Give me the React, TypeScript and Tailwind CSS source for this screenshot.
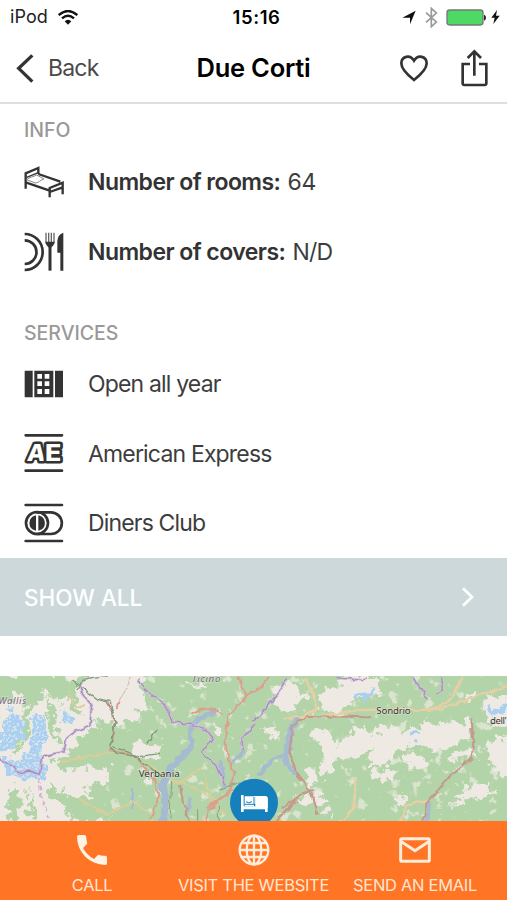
import type { ReactNode } from 'react';

const BedIcon = () => (
  <svg width="40" height="32" viewBox="0 0 120 96" fill="none" stroke="#333" strokeWidth="7">
    <path d="M5 68V22L43 6v18" />
    <path d="M8 34l35-14" strokeWidth="4" />
    <path d="M5 49l72 25M43 24l66 23M77 94V66l39-16v35M77 78l39-14" />
    <path d="M8 41c8-8 20-8 30-14l22 12c-10 2-16 12-26 12z" stroke="#888" strokeWidth="3" />
  </svg>
);

const CutleryIcon = () => (
  <svg width="40" height="40" viewBox="0 0 120 120" fill="none" stroke="#333" strokeWidth="8">
    <path d="M2 6a54 54 0 0 1 0 108" />
    <path d="M2 25a35 35 0 0 1 0 71" />
    <path d="M78 40v76" strokeWidth="9" />
    <path d="M66 2v27q0 8 12 12 12-4 12-12V2M74 2v30M82 2v30" strokeWidth="4" stroke="#666" />
    <path d="M64 29h28q-2 12-14 20-12-8-14-20z" fill="#333" stroke="none" />
    <path d="M118 2v114h-9V62h-9V28q1-21 18-26z" fill="#333" stroke="none" />
  </svg>
);

const CalendarIcon = () => (
  <svg width="40" height="28" viewBox="0 0 120 84" fill="#333">
    <path d="M2 2h24v80H2zM93 2h24v80H93z" />
    <path
      fillRule="evenodd"
      d="M31 2h57v80H31zM40 12v14h14V12zM62 12v14h14V12zM40 34v14h14V34zM62 34v14h14V34zM40 57v15h14V57zM62 57v15h14V57z"
    />
  </svg>
);

const AmexIcon = () => (
  <svg width="40" height="40" viewBox="0 0 120 120" fill="none" stroke="#333" strokeWidth="8" strokeLinecap="round">
    <path d="M5 7h109M5 113h109" />
    <g
      fill="#fff"
      strokeWidth="15"
      strokeLinejoin="round"
      paintOrder="stroke"
      fontFamily="Inter, sans-serif"
      fontWeight="800"
      fontSize="70"
    >
      <text x="0" y="83" transform="skewX(-6) translate(16 0)" textLength="54" lengthAdjust="spacingAndGlyphs">A</text>
      <text x="63" y="83" textLength="48" lengthAdjust="spacingAndGlyphs">E</text>
    </g>
  </svg>
);

const DinersIcon = () => (
  <svg width="40" height="40" viewBox="0 0 120 120" fill="none" stroke="#333" strokeWidth="8" strokeLinecap="round">
    <path d="M5 6h109M5 114h109" />
    <path d="M38 28h43a32 32 0 0 1 0 65H38" />
    <circle cx="39" cy="60" r="33" />
    <path d="M33 41a20 20 0 0 0 0 38zM46 41a20 20 0 0 1 0 38z" fill="#333" strokeWidth="6" />
  </svg>
);

const StatusBar = () => (
  <div className="grid h-[34px] grid-cols-3 items-center text-[18px] leading-none text-[#222]">
    <div className="flex items-center pl-[10px]">
      <span className="w-[48px] tracking-[0.1px]">iPod</span>
      <svg width="20" height="15" viewBox="0 0 60 45" fill="none" stroke="#111" strokeWidth="7">
        <path d="M2 15Q30-9 58 15M12 25q18-16 36 0" />
        <path d="M20 34q10-9 20 0L30 44z" fill="#111" stroke="none" />
      </svg>
    </div>
    <div className="pl-[6px] text-center text-[18.5px] font-semibold tracking-[0.6px] text-black">15:16</div>
    <div className="flex items-center justify-end pr-[7px]">
      <svg width="14" height="15" viewBox="0 0 42 45" fill="#111">
        <path d="M41 2L24 43V23H1z" />
      </svg>
      <svg className="ml-[9px]" width="13" height="21" viewBox="0 0 39 63" fill="none" stroke="#999" strokeWidth="5">
        <path d="M3 17l31 28-15 14V4l15 14L3 46" />
      </svg>
      <svg className="ml-2" width="40" height="17" viewBox="0 0 120 51">
        <rect x="3" y="3" width="108" height="45" rx="8" fill="#4cd964" stroke="#777" strokeWidth="4" />
        <path d="M114 17q6 2 6 9t-6 9z" fill="#222" />
      </svg>
      <svg className="ml-[5px]" width="9" height="14" viewBox="0 0 27 42" fill="#111">
        <path d="M18 0L1 23h10L7 42 26 17H15z" />
      </svg>
    </div>
  </div>
);

const NavBar = () => (
  <div className="flex h-[70px] items-center border-b-2 border-[#dedede] pr-[19px] pl-4 text-[#333]">
    <div className="flex flex-1 items-center">
      <svg width="18" height="29" viewBox="0 0 54 87" fill="none" stroke="#333" strokeWidth="10">
        <path d="M49 4L8 43l41 40" />
      </svg>
      <span className="ml-[14px] text-[23px] tracking-[-0.8px] text-[#4a4a4a]">Back</span>
    </div>
    <h1 className="pl-[3px] text-[25.5px] font-semibold tracking-[-0.25px] text-black">Due Corti</h1>
    <div className="flex flex-1 items-center justify-end gap-[33px]">
      <svg width="28" height="27" viewBox="0 0 84 81" fill="none" stroke="#333" strokeWidth="8">
        <path d="M42 75C20 58 4 42 4 25 4 4 30-3 42 17 54-3 80 4 80 25c0 17-16 33-38 50z" />
      </svg>
      <svg width="27" height="38" viewBox="0 0 81 114" fill="none" stroke="#333" strokeWidth="8">
        <path d="M27 45H5v58q0 5 5 5h61q5 0 5-5V45H54M40 80V9M20 27L40 7l20 20" />
      </svg>
    </div>
  </div>
);

const Row = ({ icon, children }: { icon: ReactNode; children: ReactNode }) => (
  <div className="flex h-[69.7px] items-center pl-6 text-[23px] tracking-[-0.83px] text-[#3d3d3d]">
    <div className="w-16 shrink-0">{icon}</div>
    <div className="pt-px">{children}</div>
  </div>
);

const SectionTitle = ({ children }: { children: ReactNode }) => (
  <h2 className="pl-6 text-[19.5px] leading-[34px] font-medium text-[#999]">{children}</h2>
);

// Terrain is drawn at three units per pixel
const TerrainMap = () => (
  <svg className="block h-[145px] w-full" viewBox="0 33 1521 435" preserveAspectRatio="none">
    <defs>
      <filter id="rough" x="-5%" y="-5%" width="110%" height="110%" colorInterpolationFilters="sRGB">
        <feTurbulence type="fractalNoise" baseFrequency="0.035" numOctaves="4" seed="8" />
        <feDisplacementMap in="SourceGraphic" scale="60" xChannelSelector="R" yChannelSelector="G" />
        <feGaussianBlur stdDeviation="1.5" />
      </filter>
      <filter id="wobble" x="-5%" y="-5%" width="110%" height="110%" colorInterpolationFilters="sRGB">
        <feTurbulence type="fractalNoise" baseFrequency="0.05" numOctaves="1" seed="3" />
        <feDisplacementMap in="SourceGraphic" scale="20" xChannelSelector="R" yChannelSelector="G" />
        <feGaussianBlur stdDeviation="1" />
      </filter>
      <filter id="speckle" x="0" y="0" width="100%" height="100%" colorInterpolationFilters="sRGB">
        <feTurbulence type="fractalNoise" baseFrequency="0.03" numOctaves="4" seed="12" />
        <feColorMatrix values="0 0 0 0 .93  0 0 0 0 .92  0 0 0 0 .88  9 0 0 0 -5.6" />
      </filter>
      <filter id="grain" x="0" y="0" width="100%" height="100%" colorInterpolationFilters="sRGB">
        <feTurbulence type="fractalNoise" baseFrequency="0.12" numOctaves="2" seed="5" />
        <feColorMatrix values="0 0 0 0 .93  0 0 0 0 .92  0 0 0 0 .88  9 0 0 0 -4.7" />
      </filter>
      <clipPath id="ice">
        <path d="M0 120h75v130H0zM95 140h55v130H95zM165 105h50v80h-50zM30 265h120v80H30z" />
      </clipPath>
    </defs>
    <rect y="30" width="1521" height="440" fill="#b3d4a8" />
    <rect y="30" width="1521" height="440" filter="url(#speckle)" opacity=".7" />
    <g fill="#eeeae3" filter="url(#rough)">
      <path d="M-20 10H425l5 60 10 50-38 50-120 5-40 55-50 40 20 40h120l-20 40-60 10 30 40 40 40v90H-20z" />
      <path d="M375 250l50-20 60 10-15 40-60-5zM640 180l40 10-10 30-35-5zM560 50l70 10-40 15zM430 320l30 10-10 40z" />
      <path d="M820 70l60-20 40 50-60 35-40-10zM790 180l50 5-15 35-40-20zM960 80l60-20 15-30h90l20 60-80 10-40 45-60-10z" />
      <path d="M930 190l60 10 15 40 45-35 40-20 30 30 25-35 50 15 60-5 30-20 50 10 80-15-10 50-80 45-70-20-60 10-40 60-50-10 20-50-60 20-80 30z" />
      <path d="M1220 265l50 5 10 40-60 5zM1340 290l50-45 40 30zM960 300l40-5 10 25-40 5zM1100 315l90 5-20 30-60-10zM910 310l45 5 10 35-40 10z" />
      <path d="M1450 100l90-10v90l-75-10zM1460 230l80-10v120l-60-20-10-40zM1390 370l80-20 10 40-90 15-40 30zM1390 90l40-10-20 30z" />
      <path d="M1200 380l25 10-30 30zM880 400l80-10 20 20-70 10zM950 440l50-5-10 25z" />
    </g>
    <g fill="#b3d4a8" filter="url(#rough)">
      <path d="M-10 30H200l10 60-40 20-30-30-50 60 0 50-40 80-12-10 30-90 10-60-30-30-50 50-20-10zM135 90l30 40 10 100-15-5-20-80zM210 35l45 5-30 45 25 65-28-6-20-70z" />
      <path d="M160 290l130-35 100-5 20 40-120 20-110 5zM140 350l70 50 50-10 60 10v70H210l-20-50-40-20zM35 355l30 50-10 60H15zM85 370l20 60v40H90z" />
      <path d="M235 220l80-40 70 10 10 60-80 20-75-20z" />
    </g>
    <g fill="#a9d0f2" filter="url(#rough)">
      <path d="M35 130l40 30-30 80-45 20v-60zM105 150l30 5v80l-15 40 30 40-30 30-60-10-45-15-15-40 50 10 45-20-5-50zM175 115l20 10 15 50-20 5z" />
      <path d="M1070 80l50-5 5 25-40 5zM1225 205l35-5 5 15-35 10zM1465 125l50-5v30l-35 5z" />
    </g>
    <g clipPath="url(#ice)">
      <rect y="30" width="1521" height="440" filter="url(#grain)" opacity=".7" />
    </g>
    {/* Lakes */}
    <g fill="none" stroke="#a6bbd2" strokeLinejoin="round" strokeLinecap="round" filter="url(#wobble)">
      <path d="M640 143l-45 18-25 28 5 55-28 30" strokeWidth="14" />
      <path d="M558 262l-18 18-30 35-22 45 10 50-10 60" strokeWidth="22" />
      <path d="M885 165l-20 40-8 60 5 30 20 30M860 265l-45 20-35 45" strokeWidth="12" />
      <path d="M895 160l-24 40-5 50" strokeWidth="20" />
      <path d="M730 262l-30 30M660 290l15 80M397 370v55M1290 410l-10 60M570 400l-10 50" strokeWidth="10" />
    </g>
    <g fill="none" filter="url(#wobble)">
      <path d="M180 290l80-15 80-15 75 20 120 75 70-45M610 320l25 90 40 40M545 350l120 60M230 400l90 50 80-40 60 40M205 80l25 50 25-10" stroke="#dbcd98" strokeWidth="6" />
      <path d="M1521 65l-95 30-110 40-60-2-180 2-130 20-90 2M915 38l25 50 10 45-55 24M1300 135l50-30 40-70M1070 340l-10 90-30 35M1285 405l-65 15-20 50" stroke="#e6cfa5" strokeWidth="8" />
      <path d="M715 35l25 58-55 60-10 70 8 50 20 50-15 60-60 50-20 60M735 93l40-20 35-38M570 150l50-22 50 22M620 430l80-60M330 255l80 20 60 80 5 50-25 60M350 130l5-20" stroke="#dc9f8b" strokeWidth="6" />
      <path d="M1415 160l5 70-5 50-75 65-60 70-10 55M1110 157l-190-4-42 30-10 80 25 70 45 55 15 60M850 430l50-40 40-15M830 465l60-60M540 360l10 60 20 50" stroke="#c4998c" strokeWidth="6" />
      <path d="M355 110l30-50 10-25" stroke="#cfc6bd" strokeWidth="4" />
      <path d="M315 105l25 40 3 60-13 35" stroke="#b88d80" strokeWidth="5" />
      <path d="M215 45l75 55 40 10 15 60-15 75 20 20 60 10 75 60M230 70l30-30 60-8M340 245l80 30 60-10M440 240l35-50" stroke="#7f9a7d" strokeWidth="4" />
      <path d="M515 345l-5 120M660 375l60-25M655 420v50M590 430v40" stroke="#8f9a8a" strokeWidth="3" />
    </g>
    {/* National borders */}
    <g fill="none" filter="url(#wobble)" strokeLinejoin="round">
      <path d="M-5 280l35 15 25 28 35-5 28 10 12-55 62-13 8-40 25-20 45-20 5-60-30-35-5-25M415 40l25 40 55 40 25 50 60 10 35 15 25 20-35 50 45 35 25 60M762 180l-40 45 5 35M860 40l-30 50-50 60-20 15M1010 38l80 8 10-8M1240 38l10 20 25 20 5 25M1325 35l5 40-20 15" stroke="#d3bfdd" strokeWidth="9" opacity=".8" />
      <path d="M-5 280l35 15 25 28 35-5 28 10 12-55 62-13 8-40 25-20 45-20 5-60-30-35-5-25M415 40l25 40 55 40 25 50 60 10 35 15 25 20-35 50 45 35 25 60M762 180l-40 45 5 35M860 40l-30 50-50 60-20 15M1010 38l80 8 10-8M1240 38l10 20 25 20 5 25M1325 35l5 40-20 15" stroke="#a58dbd" strokeWidth="4" />
      <path d="M118 340l5 55 25 65" stroke="#d5b2d2" strokeWidth="5" strokeDasharray="14 8" />
    </g>
    <g
      fontFamily="'Noto Sans', sans-serif"
      fontSize="29"
      fill="#333"
      stroke="#f4f4ea"
      strokeWidth="3"
      strokeOpacity=".6"
      paintOrder="stroke"
    >
      <text x="416" y="335" textLength="123">Verbania</text>
      <text x="1129" y="146" textLength="103">Sondrio</text>
      <text x="1470" y="178" textLength="50">dell'</text>
      <text x="-5" y="117" fontStyle="italic" fill="#75647f" textLength="84">Wallis</text>
      <text x="575" y="51" fontStyle="italic" fill="#75647f" textLength="86">Ticino</text>
    </g>
    {/* Hotel pin */}
    <circle cx="762" cy="413" r="72" fill="#1680bd" />
    <path d="M723 390h8v34h65v-29h-29v22h-5v-24h33q8 0 8 8v40h-8v-8h-64v8h-8z" fill="#fff" />
    <path d="M766 393h28q9 0 9 9v27h-37zM734 394h28v30h-28z" fill="#fff" />
    <path d="M734 418h28v-22" fill="none" stroke="#1680bd" strokeWidth="3" />
    <path d="M738 410q8 7 18 0" fill="none" stroke="#1680bd" strokeWidth="3" />
  </svg>
);

const CallIcon = () => (
  <svg width="30" height="30" viewBox="3 3 18 18" fill="#fff3e4">
    <path d="M6.62 10.79a15.1 15.1 0 0 0 6.59 6.59l2.2-2.2a1 1 0 0 1 1.02-.24c1.12.37 2.33.57 3.57.57a1 1 0 0 1 1 1V20a1 1 0 0 1-1 1A17 17 0 0 1 3 4a1 1 0 0 1 1-1h3.5a1 1 0 0 1 1 1c0 1.25.2 2.45.57 3.57a1 1 0 0 1-.25 1.02z" />
  </svg>
);

const GlobeIcon = () => (
  <svg width="32" height="32" viewBox="0 0 96 96" fill="none" stroke="#ffedda" strokeWidth="7">
    <circle cx="48" cy="48" r="43" />
    <ellipse cx="48" cy="48" rx="22" ry="43" />
    <path d="M48 5v86M5 48h86M12 27h72M12 69h72" />
  </svg>
);

const MailIcon = () => (
  <svg width="32" height="26" viewBox="0 0 96 78" fill="none" stroke="#ffedda" strokeWidth="9">
    <rect x="5" y="5" width="86" height="68" rx="4" />
    <path d="M5 13l43 28 43-28" />
  </svg>
);

const Action = ({ icon, label }: { icon: ReactNode; label: string }) => (
  <button className="flex flex-col items-center">
    <span className="flex h-[58px] items-center">{icon}</span>
    <span className="text-[16.5px] leading-[12px] tracking-[-0.3px] whitespace-nowrap text-[#ffe6d3]">{label}</span>
  </button>
);

const App = () => {
  return (
    <div className="flex h-[900px] w-[507px] flex-col overflow-hidden bg-white font-['Inter',sans-serif]">
      <StatusBar />
      <NavBar />
      <div className="h-[43px] pt-[9px]">
        <SectionTitle>INFO</SectionTitle>
      </div>
      <Row icon={<BedIcon />}>
        <span className="mr-[1.5px] font-semibold tracking-[-0.55px] text-[#333]">Number of rooms:</span>{' '}
        <span className="tracking-[-0.4px]">64</span>
      </Row>
      <Row icon={<CutleryIcon />}>
        <span className="mr-[1.5px] font-semibold tracking-[-0.55px] text-[#333]">Number of covers:</span> N/D
      </Row>
      <div className="h-[62.5px] pt-[29.5px]">
        <SectionTitle>SERVICES</SectionTitle>
      </div>
      <Row icon={<CalendarIcon />}>Open all year</Row>
      <Row icon={<AmexIcon />}>American Express</Row>
      <Row icon={<DinersIcon />}>Diners Club</Row>
      <div className="mb-10 flex h-[78px] shrink-0 items-center justify-between bg-[#cdd8da] pr-[33px] pl-6 text-[22.5px] font-medium text-white">
        <span className="pt-px">SHOW ALL</span>
        <svg width="13" height="20" viewBox="0 0 39 60" fill="none" stroke="#fff" strokeWidth="8">
          <path d="M6 4l27 26L6 56" />
        </svg>
      </div>
      <TerrainMap />
      <div className="grid h-[79px] shrink-0 grid-cols-[184px_139px_184px] bg-[#ff7425]">
        <Action icon={<CallIcon />} label="CALL" />
        <Action icon={<GlobeIcon />} label="VISIT THE WEBSITE" />
        <Action icon={<MailIcon />} label="SEND AN EMAIL" />
      </div>
    </div>
  );
};

export default App;
